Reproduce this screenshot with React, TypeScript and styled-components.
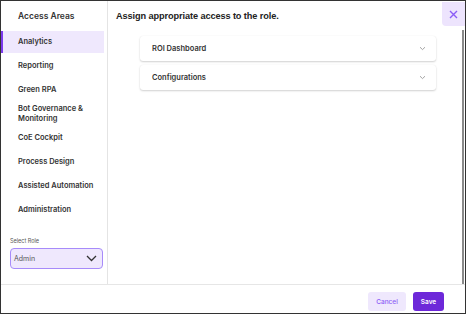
import React, { useState } from "react";
import styled, { createGlobalStyle } from "styled-components";

const GlobalStyle = createGlobalStyle`
  html, body {
    margin: 0;
    padding: 0;
    background: #ffffff;
  }
  body {
    font-family: Inter, "Liberation Sans", Arial, sans-serif;
    color: #222;
  }
`;

const areas = [
  "Analytics",
  "Reporting",
  "Green RPA",
  "Bot Governance & Monitoring",
  "CoE Cockpit",
  "Process Design",
  "Assisted Automation",
  "Administration",
];

const sections = ["ROI Dashboard", "Configurations"];

function Chevron() {
  return (
    <svg width="7" height="5" viewBox="0 0 7 5">
      <path d="M1 1.2 L3.5 3.6 L6 1.2" fill="none" stroke="#9a9a9a" strokeWidth="0.9" />
    </svg>
  );
}

function App() {
  const [selected, setSelected] = useState("Analytics");

  return (
    <>
      <GlobalStyle />
      <Frame>
        <Body>
          <Sidebar>
            <SideTitle>Access Areas</SideTitle>
            <AreaList>
              {areas.map((a) => (
                <AreaItem key={a} $active={a === selected} onClick={() => setSelected(a)}>
                  {a}
                </AreaItem>
              ))}
            </AreaList>
            <RoleWrap>
              <RoleLabel>Select Role</RoleLabel>
              <RoleSelect>
                <span>Admin</span>
                <svg width="11" height="7" viewBox="0 0 11 7">
                  <path d="M1 1 L5.5 5.5 L10 1" fill="none" stroke="#333" strokeWidth="1.3" />
                </svg>
              </RoleSelect>
            </RoleWrap>
          </Sidebar>
          <Main>
            <Content>
              <MainTitle>Assign appropriate access to the role.</MainTitle>
              <Cards>
                {sections.map((s) => (
                  <Card key={s}>
                    <CardTitle>{s}</CardTitle>
                    <Chevron />
                  </Card>
                ))}
              </Cards>
            </Content>
            <Side>
              <CloseButton>
                <svg width="9" height="9" viewBox="0 0 9 9">
                  <path d="M1 1 L8 8 M8 1 L1 8" stroke="#8b5cf6" strokeWidth="1.4" />
                </svg>
              </CloseButton>
              <ScrollBar />
            </Side>
          </Main>
        </Body>
        <Footer>
          <CancelButton>Cancel</CancelButton>
          <SaveButton>Save</SaveButton>
        </Footer>
      </Frame>
    </>
  );
}

const Frame = styled.div`
  box-sizing: border-box;
  width: 466px;
  height: 314px;
  border: 1.5px solid #333;
  display: flex;
  flex-direction: column;
  background: #fff;
`;

const Body = styled.div`
  flex: 1;
  display: flex;
  border-bottom: 1px solid #e6e6e6;
  min-height: 0;
`;

const Sidebar = styled.div`
  width: 107px;
  border-right: 1px solid #e4e4e4;
  display: flex;
  flex-direction: column;
  padding-top: 10px;
  box-sizing: border-box;
`;

const SideTitle = styled.div`
  font-size: 8.5px;
  font-weight: 600;
  color: #333;
  padding-left: 17px;
  height: 20px;
`;

const AreaList = styled.div`
  display: flex;
  flex-direction: column;
  gap: 2px;
`;

const AreaItem = styled.div<{ $active: boolean }>`
  height: 22px;
  display: flex;
  align-items: center;
  box-sizing: border-box;
  padding-left: ${(p) => (p.$active ? "15px" : "17px")};
  padding-right: 6px;
  margin-right: 3px;
  font-size: 7.5px;
  font-weight: 600;
  line-height: 10px;
  color: #333;
  background: ${(p) => (p.$active ? "#efe8fd" : "transparent")};
  border-left: ${(p) => (p.$active ? "2px solid #7c3aed" : "none")};
  cursor: pointer;
`;

const RoleWrap = styled.div`
  margin-top: auto;
  padding: 0 4px 15px 9px;
`;

const RoleLabel = styled.div`
  font-size: 5.5px;
  color: #555;
  margin-bottom: 4px;
`;

const RoleSelect = styled.div`
  box-sizing: border-box;
  height: 21px;
  border: 1px solid #a78bfa;
  border-radius: 4px;
  background: #efe8fd;
  display: flex;
  align-items: center;
  justify-content: space-between;
  padding: 0 5px 0 3px;
  font-size: 7px;
  color: #555;
`;

const Main = styled.div`
  flex: 1;
  display: flex;
`;

const Content = styled.div`
  flex: 1;
  padding: 10px 0 0 8px;
`;

const MainTitle = styled.div`
  font-family: "Liberation Sans", Arial, sans-serif;
  font-size: 9.2px;
  font-weight: 600;
  color: #222;
  letter-spacing: -0.1px;
`;

const Cards = styled.div`
  display: flex;
  flex-direction: column;
  gap: 4px;
  margin: 15px 5px 0 24px;
`;

const Card = styled.div`
  height: 25px;
  display: flex;
  align-items: center;
  justify-content: space-between;
  padding: 0 10px 0 12px;
  background: #fff;
  border-radius: 3px;
  box-shadow: 0 1px 2px rgba(0, 0, 0, 0.18), 0 0 1px rgba(0, 0, 0, 0.08);
`;

const CardTitle = styled.div`
  font-size: 7.5px;
  font-weight: 600;
  color: #333;
`;

const Side = styled.div`
  width: 24px;
  display: flex;
  flex-direction: column;
  align-items: flex-end;
`;

const CloseButton = styled.div`
  width: 23px;
  height: 24px;
  margin-top: 1px;
  background: #ede4fd;
  border-radius: 0 0 0 4px;
  display: flex;
  align-items: center;
  justify-content: center;
`;

const ScrollBar = styled.div`
  width: 2px;
  flex: 1;
  margin-top: 4px;
  margin-right: 1px;
  background: #8a8a8a;
`;

const Footer = styled.div`
  height: 28px;
  display: flex;
  align-items: flex-start;
  justify-content: flex-end;
  gap: 7px;
  padding: 7px 21px 0 0;
  box-sizing: border-box;
`;

const CancelButton = styled.button`
  height: 19px;
  width: 38px;
  border: none;
  border-radius: 3px;
  background: #efe8fd;
  color: #8b5cf6;
  font-family: Inter, "Liberation Sans", Arial, sans-serif;
  font-size: 6.5px;
  font-weight: 500;
  padding: 0;
`;

const SaveButton = styled.button`
  height: 19px;
  width: 31px;
  border: none;
  border-radius: 3px;
  background: #6d28d9;
  color: #fff;
  font-family: Inter, "Liberation Sans", Arial, sans-serif;
  font-size: 6.5px;
  font-weight: 600;
  padding: 0;
`;

export default App;
